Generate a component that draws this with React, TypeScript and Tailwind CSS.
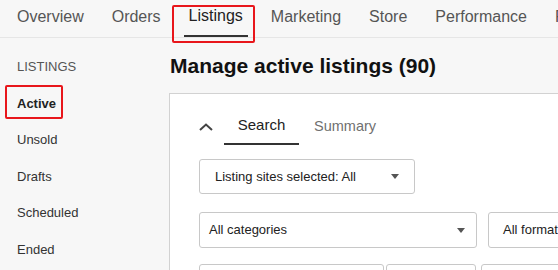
import React from "react"

const navItems = ["Overview", "Orders", "Listings", "Marketing", "Store", "Performance", "Payments"]
const sideItems = ["Active", "Unsold", "Drafts", "Scheduled", "Ended"]

function Caret() {
  return (
    <svg width="8" height="5" viewBox="0 0 8 5" className="shrink-0">
      <path d="M0 0 L8 0 L4 5 Z" fill="#555" />
    </svg>
  )
}

function Select({ label, className }: { label: string; className: string }) {
  return (
    <div
      className={`flex items-center justify-between rounded-[3px] border border-[#c8c8c8] bg-white text-[13px] text-[#222] ${className}`}
    >
      <span className="whitespace-nowrap">{label}</span>
      <Caret />
    </div>
  )
}

export default function App() {
  return (
    <div
      className="relative w-[558px] h-[270px] overflow-hidden bg-[#f7f7f7]"
      style={{ fontFamily: '"Liberation Sans", Arial, sans-serif' }}
    >
      {/* Top navigation */}
      <nav className="flex h-[38px] items-stretch gap-[18px] border-b border-[#e6e6e6] pl-[12px] whitespace-nowrap">
        {navItems.map((item) => (
          <div
            key={item}
            className={`flex items-center px-[5px] pb-[4px] text-[16px] ${
              item === "Listings" ? "border-b-2 border-[#333] text-[#222]" : "text-[#555]"
            }`}
          >
            {item}
          </div>
        ))}
      </nav>

      <div className="flex">
        {/* Sidebar */}
        <aside className="w-[169px] shrink-0 pt-[11px] pl-[17px]">
          <div className="flex h-[36px] items-center text-[13px] text-[#555]">LISTINGS</div>
          {sideItems.map((item) => (
            <div
              key={item}
              className={`flex h-[36.5px] items-center text-[13px] ${
                item === "Active" ? "font-bold text-[#222]" : "text-[#333]"
              }`}
            >
              {item}
            </div>
          ))}
        </aside>

        {/* Main */}
        <main className="flex-1 min-w-0">
          <h1 className="mt-[15px] h-[25px] pl-[1px] text-[21px] leading-[25px] font-bold text-[#111] whitespace-nowrap">
            Manage active listings (90)
          </h1>
          <div className="mt-[15px] w-[420px] border border-[#d2d2d2] bg-white pl-[29px] pt-[14px] pb-[20px]">
            {/* Tabs */}
            <div className="flex h-[37px] items-stretch">
              <div className="flex w-[25px] items-center">
                <svg width="14" height="8" viewBox="0 0 14 8">
                  <path d="M1 7 L7 1.5 L13 7" fill="none" stroke="#444" strokeWidth="2" />
                </svg>
              </div>
              <div className="flex w-[75px] items-center justify-center border-b-2 border-[#333] text-[15px] text-[#222]">
                Search
              </div>
              <div className="flex items-center pl-[15px] text-[14.5px] text-[#707070]">Summary</div>
            </div>

            <Select label="Listing sites selected: All" className="mt-[14px] h-[35px] w-[216px] pl-[15px] pr-[15px]" />

            <div className="mt-[18px] flex gap-[11px]">
              <Select label="All categories" className="h-[36px] w-[278px] shrink-0 pl-[9px] pr-[11px]" />
              <Select label="All formats" className="h-[36px] w-[120px] shrink-0 pl-[14px] pr-[11px]" />
            </div>

            <div className="mt-[16px] flex gap-[2px]">
              <div className="h-[30px] w-[185px] shrink-0 rounded-[3px] border border-[#c8c8c8]" />
              <div className="h-[30px] w-[90px] shrink-0 rounded-[3px] border border-[#c8c8c8]" />
              <div className="ml-[3px] h-[30px] w-[120px] shrink-0 rounded-[3px] border border-[#c8c8c8]" />
            </div>
          </div>
        </main>
      </div>

      {/* Annotation boxes */}
      <div className="absolute left-[172px] top-[5px] h-[38px] w-[83px] rounded-[2px] border-2 border-[#e8161b]" />
      <div className="absolute left-[5px] top-[85px] h-[34px] w-[58px] rounded-[2px] border-2 border-[#e8161b]" />
    </div>
  )
}
